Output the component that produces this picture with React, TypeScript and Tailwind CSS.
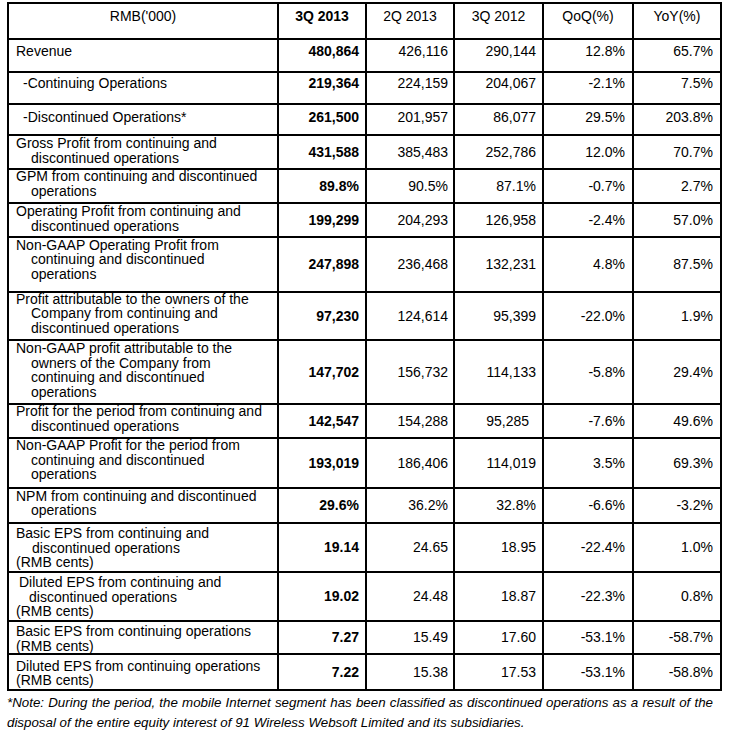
import React from "react";

type Line = [string, string];
type Row = {
  lines: Line[];
  vals: string[];
  mt: string;
  top?: boolean;
  special?: { idx: number; cls: string };
};

const rows: Row[] = [
  { lines: [["Revenue", "pl-[7px]"]], mt: "mt-[4px]", top: true, vals: ["480,864", "426,116", "290,144", "12.8%", "65.7%"] },
  { lines: [["-Continuing Operations", "pl-[14px]"]], mt: "mt-[3px]", top: true, vals: ["219,364", "224,159", "204,067", "-2.1%", "7.5%"] },
  { lines: [["-Discontinued Operations*", "pl-[14px]"]], mt: "mt-[5px]", top: true, vals: ["261,500", "201,957", "86,077", "29.5%", "203.8%"] },
  {
    lines: [["Gross Profit from continuing and", "pl-[7px]"], ["discontinued operations", "pl-[22px]"]],
    mt: "mt-[0px]",
    vals: ["431,588", "385,483", "252,786", "12.0%", "70.7%"],
  },
  {
    lines: [["GPM from continuing and discontinued", "pl-[7px]"], ["operations", "pl-[22px]"]],
    mt: "mt-[-1px]",
    vals: ["89.8%", "90.5%", "87.1%", "-0.7%", "2.7%"],
  },
  {
    lines: [["Operating Profit from continuing and", "pl-[7px]"], ["discontinued operations", "pl-[22px]"]],
    mt: "mt-[0px]",
    vals: ["199,299", "204,293", "126,958", "-2.4%", "57.0%"],
  },
  {
    lines: [
      ["Non-GAAP Operating Profit from", "pl-[7px]"],
      ["continuing and discontinued", "pl-[22px]"],
      ["operations", "pl-[22px]"],
    ],
    mt: "mt-[-0.5px]",
    vals: ["247,898", "236,468", "132,231", "4.8%", "87.5%"],
  },
  {
    lines: [
      ["Profit attributable to the owners of the", "pl-[7px]"],
      ["Company from continuing and", "pl-[22px]"],
      ["discontinued operations", "pl-[22px]"],
    ],
    mt: "mt-[-1.5px]",
    vals: ["97,230", "124,614", "95,399", "-22.0%", "1.9%"],
  },
  {
    lines: [
      ["Non-GAAP profit attributable to the", "pl-[7px]"],
      ["owners of the Company from", "pl-[22px]"],
      ["continuing and discontinued", "pl-[22px]"],
      ["operations", "pl-[22px]"],
    ],
    mt: "mt-[0px]",
    vals: ["147,702", "156,732", "114,133", "-5.8%", "29.4%"],
  },
  {
    lines: [["Profit for the period from continuing and", "pl-[7px]"], ["discontinued operations", "pl-[22px]"]],
    mt: "mt-[-1px]",
    vals: ["142,547", "154,288", "95,285", "-7.6%", "49.6%"],
    special: { idx: 2, cls: "pr-[13px]" },
  },
  {
    lines: [
      ["Non-GAAP Profit for the period from", "pl-[7px]"],
      ["continuing and discontinued", "pl-[22px]"],
      ["operations", "pl-[22px]"],
    ],
    mt: "mt-[-1px]",
    vals: ["193,019", "186,406", "114,019", "3.5%", "69.3%"],
  },
  {
    lines: [["NPM from continuing and discontinued", "pl-[7px]"], ["operations", "pl-[22px]"]],
    mt: "mt-[-0.5px]",
    vals: ["29.6%", "36.2%", "32.8%", "-6.6%", "-3.2%"],
  },
  {
    lines: [
      ["Basic EPS from continuing and", "pl-[7px]"],
      ["discontinued operations", "pl-[23px]"],
      ["(RMB cents)", "pl-[7px]"],
    ],
    mt: "mt-[2px]",
    vals: ["19.14", "24.65", "18.95", "-22.4%", "1.0%"],
  },
  {
    lines: [
      ["Diluted EPS from continuing and", "pl-[10px]"],
      ["discontinued operations", "pl-[20px]"],
      ["(RMB cents)", "pl-[7px]"],
    ],
    mt: "mt-[2px]",
    vals: ["19.02", "24.48", "18.87", "-22.3%", "0.8%"],
  },
  {
    lines: [["Basic EPS from continuing operations", "pl-[7px]"], ["(RMB cents)", "pl-[7px]"]],
    mt: "mt-[2px]",
    vals: ["7.27", "15.49", "17.60", "-53.1%", "-58.7%"],
  },
  {
    lines: [["Diluted EPS from continuing operations", "pl-[7px]"], ["(RMB cents)", "pl-[7px]"]],
    mt: "mt-[3.5px]",
    vals: ["7.22", "15.38", "17.53", "-53.1%", "-58.8%"],
  },
];

const colPr = ["pr-[6px]", "pr-[5px]", "pr-[6px]", "pr-[7px]", "pr-[7px]"];
const headers = ["3Q 2013", "2Q 2013", "3Q 2012", "QoQ(%)", "YoY(%)"];

export default function App() {
  return (
    <div className="bg-white min-h-[740px] w-[732px] font-['Liberation_Sans',Arial,sans-serif] text-black text-[14px] leading-[14.5px] pt-[2px] pl-[7px]">
      <div className="grid w-fit grid-cols-[268px_86px_86px_87px_88px_86px] grid-rows-[34px_31px_30px_29px_32px_32px_32px_53px_46px_62px_32px_48px_33px_47px_47px_31px_34px] gap-[2px] bg-black p-[2px]">
        <div className="bg-white flex justify-center items-start">
          <div className="mt-[5px]">RMB('000)</div>
        </div>
        {headers.map((h, i) => (
          <div key={h} className="bg-white flex justify-center items-start">
            <div className={i === 0 ? "mt-[5px] font-bold" : "mt-[5px]"}>{h}</div>
          </div>
        ))}
        {rows.map((r, ri) => (
          <React.Fragment key={ri}>
            <div className="bg-white flex flex-col items-start">
              <div className={r.mt}>
                {r.lines.map(([t, pl], li) => (
                  <div key={li} className={`${pl} whitespace-nowrap`}>
                    {t}
                  </div>
                ))}
              </div>
            </div>
            {r.vals.map((v, vi) => {
              const pr = r.special && r.special.idx === vi ? r.special.cls : colPr[vi];
              return (
                <div
                  key={vi}
                  className={`bg-white flex justify-end ${r.top ? "items-start" : "items-center"} ${pr}`}
                >
                  <div className={`${r.top ? r.mt : ""} ${vi === 0 ? "font-bold" : ""} whitespace-nowrap`}>{v}</div>
                </div>
              );
            })}
          </React.Fragment>
        ))}
      </div>
      <div className="w-[706px] mt-[2px] italic text-[13.33px] leading-[20px]">
        <div className="text-justify [text-align-last:justify]">
          *Note: During the period, the mobile Internet segment has been classified as discontinued operations as a result of the
        </div>
        <div>disposal of the entire equity interest of 91 Wireless Websoft Limited and its subsidiaries.</div>
      </div>
    </div>
  );
}
